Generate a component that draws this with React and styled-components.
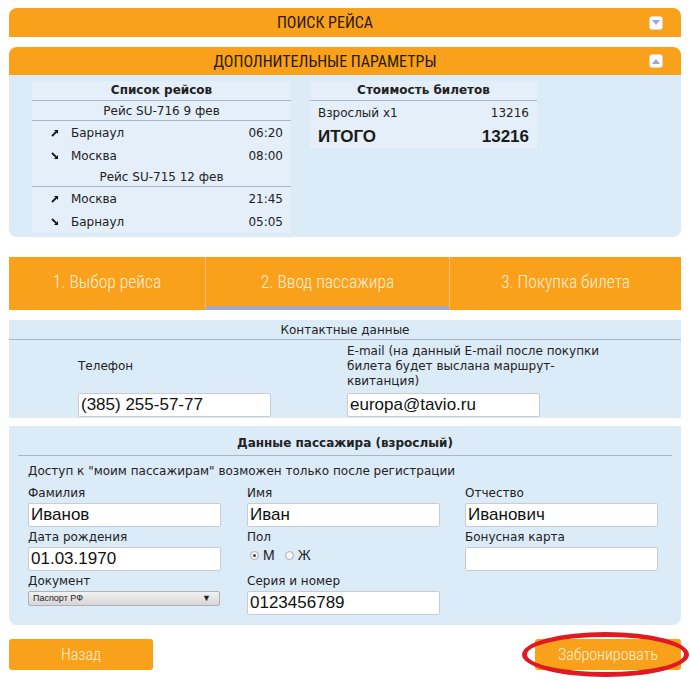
import React from "react";
import styled, { createGlobalStyle } from "styled-components";

const Global = createGlobalStyle`
  html, body { margin: 0; padding: 0; background: #fff; }
  body { font-family: "DejaVu Sans", Verdana, sans-serif; font-size: 12px; color: #222; }
`;

const ORANGE = "#f9a11b";
const BLUE = "#dcebf8";
const LINE = "#a9b6c6";
const NARROW = `"Liberation Sans Narrow", "Roboto Condensed", "Liberation Sans", sans-serif`;

const Page = styled.div`
  padding: 8px 9px 0;
  display: flex;
  flex-direction: column;
  position: relative;
  height: 674px;
`;

const Bar = styled.div`
  height: ${(p) => p.$h}px;
  margin-top: ${(p) => p.$mt || 0}px;
  background: ${ORANGE};
  border-radius: 8px 8px 0 0;
  display: flex;
  align-items: center;
  justify-content: center;
  padding-right: 40px;
  position: relative;
  font-family: ${NARROW};
  font-stretch: condensed;
  font-size: 16px;
  color: #2a1a05;
  text-transform: uppercase;
`;

const Toggle = styled.span`
  position: absolute;
  right: 18px;
  top: 50%;
  margin-top: -7px;
  width: 14px;
  height: 14px;
  border-radius: 3px;
  background: #fbfbff;
  border: 1px solid #e6d4b8;
  box-sizing: border-box;
  display: flex;
  align-items: center;
  justify-content: center;
`;

const Tri = ({ up }) => (
  <svg width="8" height="5" viewBox="0 0 8 5">
    {up ? <path d="M0 5 L4 0 L8 5 Z" fill="#9ea4d8" /> : <path d="M0 0 L8 0 L4 5 Z" fill="#9ea4d8" />}
  </svg>
);

const Params = styled.div`
  background: ${BLUE};
  border-radius: 0 0 8px 8px;
  height: 162px;
  box-sizing: border-box;
  padding: 6px 0 0 23px;
  display: flex;
  gap: 19px;
  align-items: flex-start;
`;

const Table = styled.div`
  width: ${(p) => p.$w}px;
  background: #e4eff9;
  display: flex;
  flex-direction: column;
`;

const THead = styled.div`
  height: 19px;
  line-height: 19px;
  text-align: center;
  font-weight: bold;
  border-bottom: 1px solid ${LINE};
`;

const Sub = styled.div`
  height: 19px;
  line-height: 20px;
  text-align: center;
  border-bottom: 1px solid ${LINE};
`;

const FRow = styled.div`
  height: 23px;
  display: grid;
  grid-template-columns: 39px 1fr auto;
  align-items: center;
  padding-right: 8px;
`;

const ArrowCell = styled.span`
  display: flex;
  justify-content: center;
  padding-left: 6px;
`;

const Arrow = ({ down }) => (
  <svg width="8" height="8" viewBox="0 0 8 8" style={{ transform: down ? "rotate(90deg)" : "none" }}>
    <path d="M1 7 L5.2 2.8" stroke="#111" strokeWidth="1.8" />
    <path d="M3 1 L7 1 L7 5 Z" fill="#111" />
  </svg>
);

const CRow = styled.div`
  height: ${(p) => p.$h}px;
  display: flex;
  align-items: center;
  justify-content: space-between;
  padding: 0 8px;
  ${(p) =>
    p.$total &&
    `font-family: "Liberation Sans", Arial, sans-serif; font-weight: bold; font-size: 17px; color: #1a1a1a; padding-top: 1px;`}
`;

const Tabs = styled.div`
  margin-top: 20px;
  height: 53px;
  background: ${ORANGE};
  display: grid;
  grid-template-columns: 196px 244px 1fr;
`;

const Tab = styled.div`
  display: flex;
  align-items: center;
  justify-content: center;
  font-family: ${NARROW};
  font-stretch: condensed;
  font-size: 17.5px;
  font-weight: 300;
  color: #fdf0dc;
  box-sizing: border-box;
  border-left: ${(p) => (p.$first ? "none" : "1px solid #f3c27a")};
  border-bottom: 4px solid ${(p) => (p.$active ? "#a5a8c4" : "transparent")};
  padding-top: 1px;
`;

const Contact = styled.div`
  margin-top: 10px;
  background: ${BLUE};
  height: 98px;
  box-sizing: border-box;
  display: flex;
  flex-direction: column;
`;

const CTitle = styled.div`
  height: 19px;
  line-height: 20px;
  text-align: center;
  border-bottom: 1px solid ${LINE};
`;

const CGrid = styled.div`
  display: grid;
  grid-template-columns: 69px 269px 193px;
  grid-template-rows: 47px 24px;
  row-gap: 3px;
  padding-top: 3px;
  align-items: center;
`;

const CLabel = styled.div`
  grid-column: ${(p) => p.$col};
  line-height: 15px;
  width: 260px;
`;

const Input = styled.div`
  grid-column: ${(p) => p.$col || "auto"};
  width: 193px;
  height: 24px;
  box-sizing: border-box;
  background: #fff;
  border: 1px solid #c9ccd2;
  border-radius: 2px;
  font-family: "Liberation Sans", Arial, sans-serif;
  font-size: 17px;
  line-height: 22px;
  padding-left: 2px;
  color: #111;
  white-space: nowrap;
  overflow: hidden;
`;

const Passenger = styled.div`
  margin-top: 8px;
  background: ${BLUE};
  height: 199px;
  border-radius: 0 0 8px 8px;
  box-sizing: border-box;
  padding: 10px 9px 0;
`;

const PTitle = styled.div`
  font-weight: bold;
  text-align: center;
  line-height: 15px;
  padding-bottom: 4px;
  border-bottom: 1px solid ${LINE};
`;

const Note = styled.div`
  line-height: 15px;
  margin: 8px 0 0 10px;
`;

const PGrid = styled.div`
  margin: 7px 0 0 10px;
  display: grid;
  grid-template-columns: 219px 218px 193px;
  row-gap: 3px;
`;

const Field = styled.div`
  display: flex;
  flex-direction: column;
  gap: 2px;
`;

const Label = styled.div`
  line-height: 15px;
`;

const Radios = styled.div`
  height: 24px;
  display: flex;
  align-items: flex-start;
  padding-left: 3px;
  font-family: "Liberation Sans", Arial, sans-serif;
  font-size: 14px;
  line-height: 16px;
`;

const RadioItem = styled.label`
  display: flex;
  align-items: center;
  gap: 4px;
  margin-right: 10px;
`;

const Radio = styled.span`
  width: 9px;
  height: 9px;
  border-radius: 50%;
  border: 1px solid #a8acb2;
  background: #f6f6f6;
  box-sizing: border-box;
  display: flex;
  align-items: center;
  justify-content: center;
  &::after {
    content: "";
    width: 3px;
    height: 3px;
    border-radius: 50%;
    background: ${(p) => (p.$on ? "#444" : "transparent")};
  }
`;

const Select = styled.div`
  width: 192px;
  height: 15px;
  box-sizing: border-box;
  border: 1px solid #aeb1b6;
  border-radius: 2px;
  background: linear-gradient(#f2f2f2, #d6d6d6);
  font-family: "Liberation Sans", Arial, sans-serif;
  font-size: 9px;
  line-height: 13px;
  padding: 0 8px 0 4px;
  display: flex;
  justify-content: space-between;
  color: #222;
`;

const Buttons = styled.div`
  margin-top: 14px;
  display: flex;
  justify-content: space-between;
  position: relative;
`;

const Button = styled.div`
  width: ${(p) => p.$w}px;
  height: 31px;
  background: ${ORANGE};
  border-radius: 3px;
  display: flex;
  align-items: center;
  justify-content: center;
  font-family: ${NARROW};
  font-stretch: condensed;
  font-size: 16px;
  font-weight: 300;
  color: #fdf0dc;
`;

const Circle = styled.div`
  position: absolute;
  right: -8px;
  top: -7px;
  width: 167px;
  height: 45px;
  border: 5px solid #e01a22;
  border-radius: 50%;
  box-sizing: border-box;
  pointer-events: none;
`;

export default function App() {
  return (
    <>
      <Global />
      <Page>
        <Bar $h={29}>
          Поиск рейса
          <Toggle><Tri /></Toggle>
        </Bar>
        <Bar $h={28} $mt={10}>
          Дополнительные параметры
          <Toggle><Tri up /></Toggle>
        </Bar>
        <Params>
          <Table $w={259}>
            <THead>Список рейсов</THead>
            <Sub>Рейс SU-716 9 фев</Sub>
            <FRow><ArrowCell><Arrow /></ArrowCell><span>Барнаул</span><span>06:20</span></FRow>
            <FRow><ArrowCell><Arrow down /></ArrowCell><span>Москва</span><span>08:00</span></FRow>
            <Sub>Рейс SU-715 12 фев</Sub>
            <FRow><ArrowCell><Arrow /></ArrowCell><span>Москва</span><span>21:45</span></FRow>
            <FRow><ArrowCell><Arrow down /></ArrowCell><span>Барнаул</span><span>05:05</span></FRow>
          </Table>
          <Table $w={227}>
            <THead>Стоимость билетов</THead>
            <CRow $h={24}><span>Взрослый x1</span><span>13216</span></CRow>
            <CRow $h={22} $total><span>ИТОГО</span><span>13216</span></CRow>
          </Table>
        </Params>
        <Tabs>
          <Tab $first>1. Выбор рейса</Tab>
          <Tab $active>2. Ввод пассажира</Tab>
          <Tab>3. Покупка билета</Tab>
        </Tabs>
        <Contact>
          <CTitle>Контактные данные</CTitle>
          <CGrid>
            <CLabel $col={2}>Телефон</CLabel>
            <CLabel $col={3}>E-mail (на данный E-mail после покупки билета будет выслана маршрут-квитанция)</CLabel>
            <Input $col={2}>(385) 255-57-77</Input>
            <Input $col={3}>europa@tavio.ru</Input>
          </CGrid>
        </Contact>
        <Passenger>
          <PTitle>Данные пассажира (взрослый)</PTitle>
          <Note>Доступ к "моим пассажирам" возможен только после регистрации</Note>
          <PGrid>
            <Field><Label>Фамилия</Label><Input>Иванов</Input></Field>
            <Field><Label>Имя</Label><Input>Иван</Input></Field>
            <Field><Label>Отчество</Label><Input>Иванович</Input></Field>
            <Field><Label>Дата рождения</Label><Input>01.03.1970</Input></Field>
            <Field>
              <Label>Пол</Label>
              <Radios>
                <RadioItem><Radio $on />М</RadioItem>
                <RadioItem><Radio />Ж</RadioItem>
              </Radios>
            </Field>
            <Field><Label>Бонусная карта</Label><Input /></Field>
            <Field>
              <Label>Документ</Label>
              <Select><span>Паспорт РФ</span><span>▼</span></Select>
            </Field>
            <Field><Label>Серия и номер</Label><Input>0123456789</Input></Field>
          </PGrid>
        </Passenger>
        <Buttons>
          <Button $w={144}>Назад</Button>
          <Button $w={146}>Забронировать</Button>
          <Circle />
        </Buttons>
      </Page>
    </>
  );
}
